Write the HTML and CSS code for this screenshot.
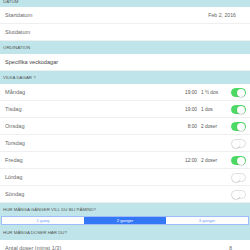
FILE: index.html
```html
<!DOCTYPE html>
<html lang="sv">
<head>
    <meta charset="UTF-8">
    <title>Påminnelse</title>
    <link rel="stylesheet" href="styles.css">
</head>
<body>
    <div class="screen">
        <div class="section-header first">DATUM</div>
        <div class="row"><span class="label">Startdatum</span><span class="value">Feb 2, 2016</span></div>
        <div class="row"><span class="label">Slutdatum</span></div>

        <div class="section-header">ORDINATION</div>
        <div class="row"><span class="label dark">Specifika veckodagar</span></div>

        <div class="section-header">VILKA DAGAR ?</div>
        <div class="row"><span class="label">Måndag</span><span class="time">19:00</span><span class="dose">1 ½ dos</span><span class="toggle on"></span></div>
        <div class="row"><span class="label">Tisdag</span><span class="time">19:00</span><span class="dose">1 dos</span><span class="toggle on"></span></div>
        <div class="row"><span class="label">Onsdag</span><span class="time">8:00</span><span class="dose">2 doser</span><span class="toggle on"></span></div>
        <div class="row"><span class="label">Torsdag</span><span class="time"></span><span class="dose"></span><span class="toggle"></span></div>
        <div class="row"><span class="label">Fredag</span><span class="time">12:00</span><span class="dose">2 doser</span><span class="toggle on"></span></div>
        <div class="row"><span class="label">Lördag</span><span class="time"></span><span class="dose"></span><span class="toggle"></span></div>
        <div class="row"><span class="label">Söndag</span><span class="time"></span><span class="dose"></span><span class="toggle"></span></div>

        <div class="section-header">HUR MÅNGA GÅNGER VILL DU BLI PÅMIND?</div>
        <div class="segment-wrap">
            <div class="segments">
                <div class="segment">1 gång</div>
                <div class="segment active">2 gånger</div>
                <div class="segment">3 gånger</div>
            </div>
        </div>
        <div class="section-header tall">HUR MÅNGA DOSER HAR DU?</div>
        <div class="row"><span class="label">Antal doser (minst 1/3)</span><span class="value small">8</span></div>
    </div>
</body>
</html>
```

FILE: styles.css
```css
:root {
    --header-bg: #bfe5ea;
    --text-color: #6a6a6a;
    --line-color: #efefef;
    --green: #4cd964;
    --blue: #3478f6;
}

body {
    margin: 0;
    background-color: #ffffff;
    font-family: "Liberation Sans", Arial, sans-serif;
    color: var(--text-color);
    overflow: hidden;
}

.screen {
    width: 250px;
    margin-top: -6px;
}

.section-header {
    height: 13px;
    background-color: var(--header-bg);
    font-size: 4.4px;
    color: #555;
    padding-left: 3px;
    display: flex;
    align-items: center;
    box-sizing: border-box;
}

.section-header.first {
    align-items: flex-end;
    padding-bottom: 3px;
}

.section-header.tall {
    height: 15px;
}

.row {
    height: 17px;
    display: flex;
    align-items: center;
    padding: 0 4px 0 5px;
    border-bottom: 1px solid var(--line-color);
    box-sizing: border-box;
    font-size: 5.6px;
}

.label {
    flex: 1;
}

.label.dark {
    color: #444;
}

.value {
    font-size: 5.2px;
    color: #666;
    padding-right: 10px;
}

.value.small {
    padding-right: 14px;
    font-size: 5px;
}

.time {
    width: 20px;
    text-align: right;
    font-size: 4.8px;
    color: #555;
}

.dose {
    width: 34px;
    padding-left: 4px;
    font-size: 4.8px;
    color: #555;
    box-sizing: border-box;
}

.toggle {
    width: 15px;
    height: 9px;
    border-radius: 5px;
    border: 0.6px solid #e0e0e0;
    background-color: #fff;
    box-sizing: border-box;
    position: relative;
}

.toggle::after {
    content: "";
    position: absolute;
    top: 0;
    left: 0;
    width: 8px;
    height: 8px;
    border-radius: 50%;
    background-color: #fff;
    box-shadow: 0 0.5px 1px rgba(0, 0, 0, 0.3);
}

.toggle.on {
    background-color: var(--green);
    border-color: var(--green);
}

.toggle.on::after {
    left: auto;
    right: 0;
}

.segment-wrap {
    background-color: var(--header-bg);
    padding: 0 1px;
}

.segments {
    display: flex;
    height: 9px;
    border: 1px solid #9fbdf8;
    background-color: #fff;
    box-sizing: border-box;
}

.segment {
    flex: 1;
    display: flex;
    align-items: center;
    justify-content: center;
    font-size: 4.2px;
    color: #6f9cf5;
}

.segment.active {
    background-color: var(--blue);
    color: #fff;
}
```
